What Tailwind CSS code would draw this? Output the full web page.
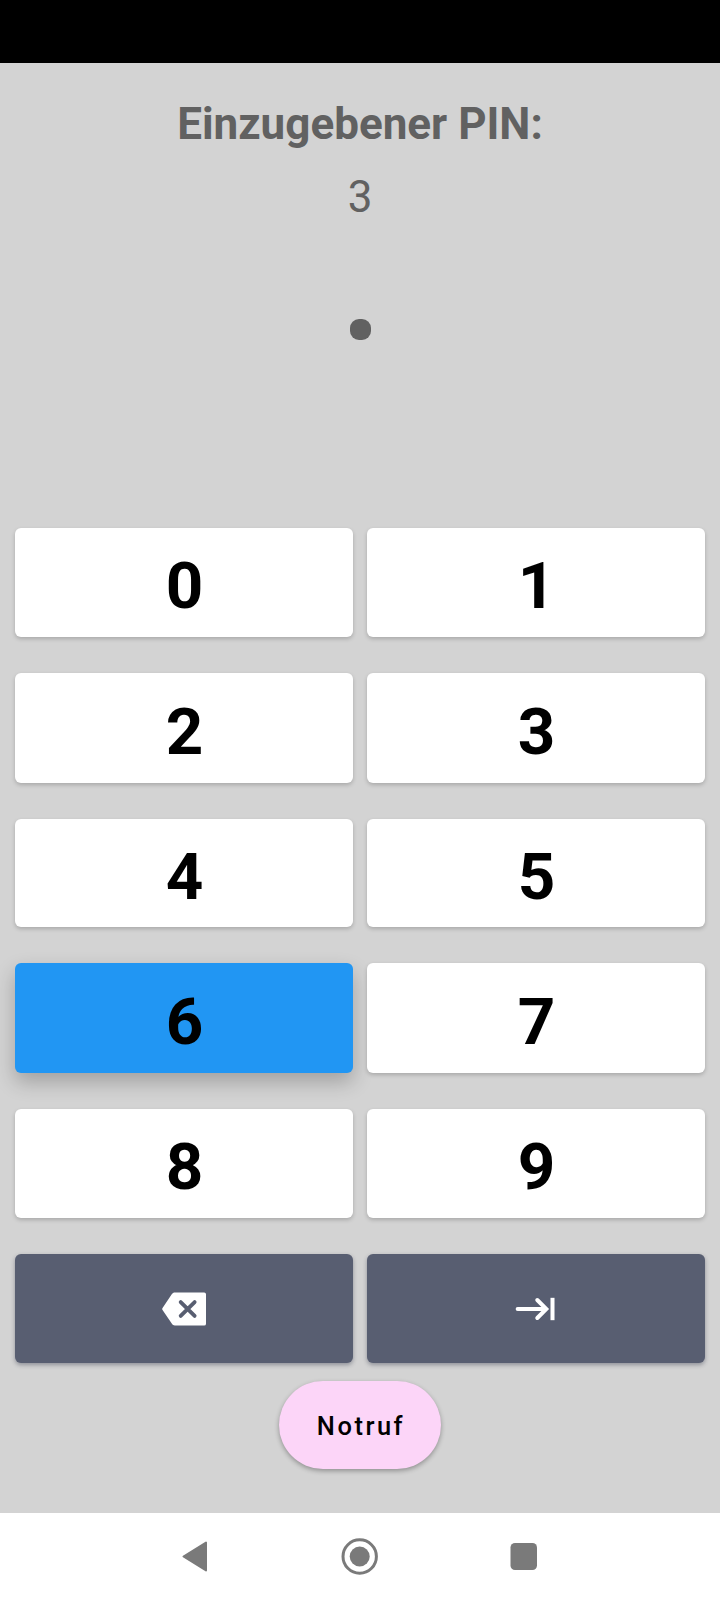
<!DOCTYPE html>
<html lang="de">
<head>
<meta charset="utf-8">
<title>PIN</title>
<script src="https://cdn.jsdelivr.net/npm/@tailwindcss/browser@4"></script>
</head>
<body class="w-[720px] h-[1600px] overflow-hidden flex flex-col bg-[#d3d3d3] font-[Roboto,sans-serif] text-black">
<div class="h-[63px] shrink-0 bg-black"></div>
<main class="h-[1450px] shrink-0 flex flex-col items-center">
  <h1 class="mt-[34px] h-[54px] leading-[54px] text-[44px] font-bold text-[#616161] whitespace-nowrap">Einzugebener PIN:</h1>
  <p class="mt-[19px] h-[54px] leading-[54px] text-[44px] text-[#616161]">3</p>
  <div class="mt-[95px] ml-px size-[21px] rounded-[9px] bg-[#616161]"></div>
  <div class="mt-[188px] w-[690px] grid grid-cols-2 grid-rows-[109px_110px_108px_110px_109px_109px] gap-x-[14px] gap-y-9 text-[65.5px] font-bold leading-[66px]">
    <button class="pt-[7px] pl-px rounded-md bg-white shadow-[0_2px_4px_rgba(0,0,0,0.2)]">0</button>
    <button class="pt-[7px] pl-px rounded-md bg-white shadow-[0_2px_4px_rgba(0,0,0,0.2)]">1</button>
    <button class="pt-[7px] pl-px rounded-md bg-white shadow-[0_2px_4px_rgba(0,0,0,0.2)]">2</button>
    <button class="pt-[7px] pl-px rounded-md bg-white shadow-[0_2px_4px_rgba(0,0,0,0.2)]">3</button>
    <button class="pt-[7px] pl-px rounded-md bg-white shadow-[0_2px_4px_rgba(0,0,0,0.2)]">4</button>
    <button class="pt-[7px] pl-px rounded-md bg-white shadow-[0_2px_4px_rgba(0,0,0,0.2)]">5</button>
    <button class="pt-[7px] pl-px rounded-md bg-[#2196f3] shadow-[0_9px_20px_rgba(0,0,0,0.24)]">6</button>
    <button class="pt-[7px] pl-px rounded-md bg-white shadow-[0_2px_4px_rgba(0,0,0,0.2)]">7</button>
    <button class="pt-[7px] pl-px rounded-md bg-white shadow-[0_2px_4px_rgba(0,0,0,0.2)]">8</button>
    <button class="pt-[7px] pl-px rounded-md bg-white shadow-[0_2px_4px_rgba(0,0,0,0.2)]">9</button>
    <button class="flex items-center justify-center rounded-md bg-[#585e71] shadow-[0_2px_4px_rgba(40,44,64,0.4)]" aria-label="Löschen">
      <svg class="size-11" viewBox="0 0 24 24"><path fill="#fff" d="M23 3H7c-.69 0-1.23.35-1.59.88L.3 11.4a1.1 1.1 0 0 0 0 1.2l5.11 7.51c.36.53.9.89 1.59.89h16a1 1 0 0 0 1-1V4a1 1 0 0 0-1-1z"/><path d="M10.2 8.2l7.6 7.6M17.8 8.2l-7.6 7.6" stroke="#585e71" stroke-width="2.1" stroke-linecap="round"/></svg>
    </button>
    <button class="flex items-center justify-center rounded-md bg-[#585e71] shadow-[0_2px_4px_rgba(40,44,64,0.4)]" aria-label="Weiter">
      <svg class="size-11" viewBox="0 0 24 24" fill="none" stroke="#fff" stroke-width="2.2"><path stroke-linecap="round" d="M2 12h15M12.7 7.1l4.9 4.9-4.9 4.9"/><path d="M21 5.9v12.2"/></svg>
    </button>
  </div>
  <button class="mt-[18px] w-[162px] h-[88px] pt-[3px] pl-[2px] rounded-full bg-[#fcd5f8] text-[25.5px] font-medium tracking-[2.5px] shadow-[0_2px_5px_rgba(0,0,0,0.32)]">Notruf</button>
</main>
<nav class="grow bg-white flex justify-center">
  <svg class="w-[400px] h-[87px]" viewBox="160 1513 400 87" fill="#7a7a7a">
    <path d="M183.5 1556.5L206 1542.5v28z" stroke="#7a7a7a" stroke-width="2" stroke-linejoin="round"/>
    <circle cx="359.7" cy="1556.5" r="16.7" fill="none" stroke="#7a7a7a" stroke-width="3"/>
    <circle cx="359.7" cy="1556.5" r="10"/>
    <rect x="510.5" y="1543" width="26.5" height="27" rx="4.5"/>
  </svg>
</nav>
</body>
</html>
